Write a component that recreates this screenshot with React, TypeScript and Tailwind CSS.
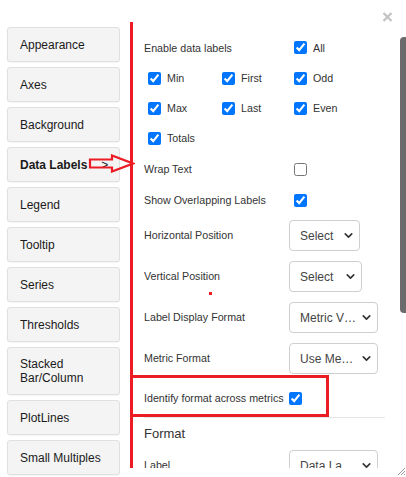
import { ChevronDown } from 'lucide-react';

const tabs = [
  'Appearance',
  'Axes',
  'Background',
  'Data Labels',
  'Legend',
  'Tooltip',
  'Series',
  'Thresholds',
  'Stacked Bar/Column',
  'PlotLines',
  'Small Multiples',
];

function Check({ on = true }: { on?: boolean }) {
  return <input type="checkbox" defaultChecked={on} className="h-[13px] w-[13px] shrink-0" />;
}

function Select({ text, w }: { text: string; w: string }) {
  return (
    <div className={`flex h-[31px] items-center justify-between rounded-[4px] border border-[#cfcfcf] pl-[10px] pr-[4px] text-[12px] text-[#444] ${w}`}>
      <span className="whitespace-nowrap">{text}</span>
      <ChevronDown size={13} strokeWidth={3} className="text-[#333]" />
    </div>
  );
}

function Row({ label, h, children }: { label: string; h: string; children?: React.ReactNode }) {
  return (
    <div className={`flex items-center ${h}`}>
      <span className="w-[145px] shrink-0">{label}</span>
      {children}
    </div>
  );
}

export default function App() {
  return (
    <div className="relative flex h-[477px] w-[406px] overflow-hidden bg-white font-['Liberation_Sans',Arial,sans-serif]">
      {/* left nav */}
      <div className="flex w-[130px] shrink-0 flex-col gap-[5px] pl-[7px] pr-[10px] pt-[27px]">
        {tabs.map((t) => (
          <div
            key={t}
            className={`flex shrink-0 items-center rounded-[3px] border border-[#e0e0e0] bg-[#f4f4f4] pl-[12px] pr-[8px] text-[12px] leading-[14px] text-[#1a1a1a] shadow-[0_1px_1px_rgba(0,0,0,0.04)] ${
              t === 'Stacked Bar/Column' ? 'h-[48px]' : 'h-[35px]'
            } ${t === 'Data Labels' ? 'font-bold' : ''}`}
          >
            {t === 'Stacked Bar/Column' ? (
              <span>
                Stacked
                <br />
                Bar/Column
              </span>
            ) : (
              t
            )}
            {t === 'Data Labels' && <span className="ml-[14px] font-normal">&gt;</span>}
          </div>
        ))}
      </div>

      {/* settings panel */}
      <div className="mt-[22px] h-[446px] flex-1 overflow-hidden border-l-[3px] border-[#ec1c24] pl-[11px] pr-[21px] pt-[11px] text-[10.7px] text-[#333]">
        <div className="flex h-[30px] items-center">
          <span className="w-[150px] shrink-0">Enable data labels</span>
          <label className="flex items-center gap-[6px]">
            <Check />
            All
          </label>
        </div>
        <div className="grid grid-cols-[74px_72px_auto] pl-[4px]">
          {['Min', 'First', 'Odd', 'Max', 'Last', 'Even', 'Totals'].map((k) => (
            <label key={k} className="flex h-[30px] items-center gap-[6px]">
              <Check />
              {k}
            </label>
          ))}
        </div>
        <div className="flex h-[32px] items-center">
          <span className="w-[150px] shrink-0">Wrap Text</span>
          <Check on={false} />
        </div>
        <div className="flex h-[30px] items-center">
          <span className="w-[150px] shrink-0">Show Overlapping Labels</span>
          <Check />
        </div>
        <Row label="Horizontal Position" h="h-[41px]">
          <Select text="Select" w="w-[71px]" />
        </Row>
        <Row label="Vertical Position" h="h-[41px]">
          <Select text="Select" w="w-[73px]" />
        </Row>
        <Row label="Label Display Format" h="h-[41px]">
          <Select text="Metric V…" w="w-[89px]" />
        </Row>
        <Row label="Metric Format" h="h-[41px]">
          <Select text="Use Me…" w="w-[89px]" />
        </Row>
        <Row label="Identify format across metrics" h="h-[38px]">
          <Check />
        </Row>
        <div className="border-t border-[#e6e6e6]" />
        <div className="flex h-[32px] items-center text-[13px]">Format</div>
        <Row label="Label" h="h-[31px]">
          <Select text="Data La…" w="w-[89px]" />
        </Row>
      </div>

      {/* close */}
      <svg className="absolute left-[382px] top-[12px]" width="11" height="10" viewBox="0 0 11 10">
        <path d="M1.5 1L9.5 9M9.5 1L1.5 9" stroke="#c4c4c4" strokeWidth="2.4" />
      </svg>

      {/* scrollbar thumb */}
      <div className="absolute left-[400px] top-[37px] h-[276px] w-[10px] rounded-[4px] bg-[#6b6b6b]" />

      {/* resize grip */}
      <svg className="absolute left-[396px] top-[466px]" width="10" height="10" viewBox="0 0 10 10">
        <path d="M9 2L2 9M9 5L5 9M9 8L8 9" stroke="#999" strokeWidth="1" />
      </svg>

      {/* annotations */}
      <svg className="absolute left-[88px] top-[154px]" width="47" height="19" viewBox="0 0 47 19">
        <path d="M2 5.5H24V1.5L45 9.5L24 17.5V13.5H2Z" fill="none" stroke="#ec1c24" strokeWidth="2.2" strokeLinejoin="miter" />
      </svg>
      <div className="absolute left-[130px] top-[375px] h-[42px] w-[199px] border-[3px] border-[#ec1c24]" />
      <div className="absolute left-[209px] top-[292px] h-[3px] w-[3px] bg-[#ec1c24]" />
    </div>
  );
}
